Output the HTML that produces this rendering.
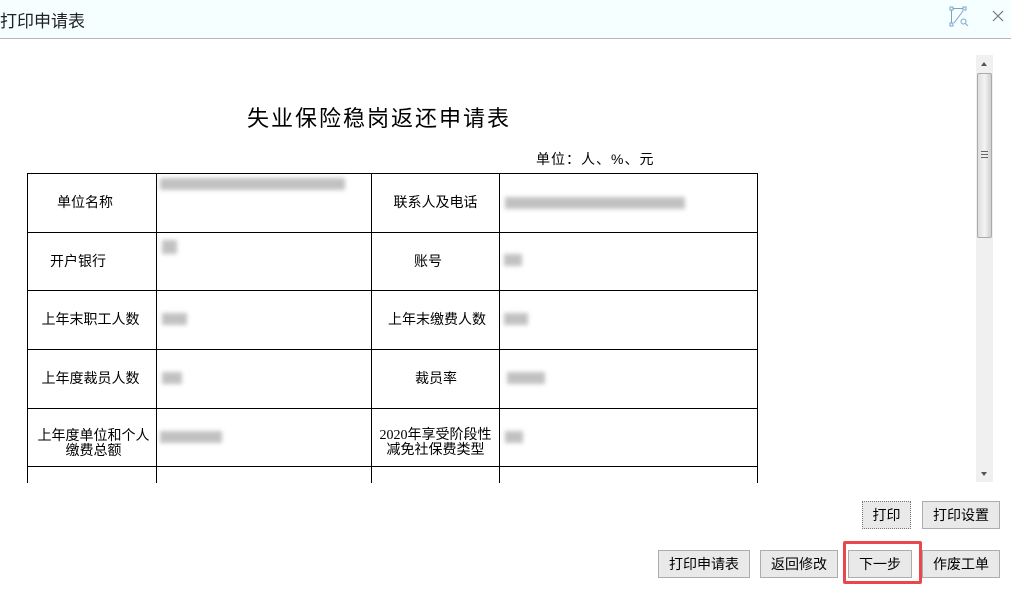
<!DOCTYPE html>
<html><head><meta charset="utf-8"><style>
*{margin:0;padding:0;box-sizing:border-box}
body{width:1011px;height:589px;background:#fff;position:relative;overflow:hidden;font-family:"Liberation Sans","Noto Sans CJK SC",sans-serif;color:#000}
.hd{position:absolute;left:0;top:0;width:1011px;height:39px;background:#f5ffff;border-bottom:1px solid #b5b8b8}
.hd .t{position:absolute;left:0;top:7px;font-size:17px;color:#222}
.a{position:absolute}
.cell{position:absolute;font-size:14px;text-align:center;line-height:15px}
.h{position:absolute;background:#000;height:1px;left:27px;width:731px}
.v{position:absolute;background:#000;width:1px;top:173px;height:310px}
.bl{position:absolute;background:#999;filter:blur(2px);opacity:.6;height:12px}
.btn{position:absolute;height:28px;border:1px solid #adadad;background:#e9e9e9;font-size:14px;text-align:center;line-height:26px;color:#000}
</style></head><body>
<div class="hd"><div class="t">打印申请表</div>
<svg class="a" style="left:948px;top:5px" width="24" height="24" viewBox="0 0 24 24" fill="none" stroke="#7fa3c6" stroke-width="1"><rect x="2" y="2" width="3" height="3"/><rect x="15" y="2" width="3" height="3"/><rect x="2" y="18" width="3" height="3"/><path d="M5 3.5h10M3.5 5v13M15 6l-9 12"/><circle cx="15.5" cy="16.5" r="2.5"/><path d="M17.5 18.5l2.5 2.5"/></svg>
<svg class="a" style="left:991px;top:9px" width="14" height="14" viewBox="0 0 14 14" stroke="#777" stroke-width="1.2"><path d="M2 2l10 10M12 2L2 12"/></svg>
</div>
<div class="a" style="left:247px;top:101px;font-size:22px;letter-spacing:2px">失业保险稳岗返还申请表</div>
<div class="a" style="left:536px;top:149px;font-size:14px;letter-spacing:1px">单位：人、%、元</div>
<div class="h" style="top:173px"></div><div class="h" style="top:232px"></div><div class="h" style="top:290px"></div><div class="h" style="top:349px"></div><div class="h" style="top:408px"></div><div class="h" style="top:466px"></div>
<div class="v" style="left:27px"></div><div class="v" style="left:156px"></div><div class="v" style="left:371px"></div><div class="v" style="left:499px"></div><div class="v" style="left:757px"></div>
<div class="cell" style="left:28px;width:114px;top:195px">单位名称</div>
<div class="cell" style="left:372px;width:127px;top:195px">联系人及电话</div>
<div class="cell" style="left:14px;width:128px;top:254px">开户银行</div>
<div class="cell" style="left:372px;width:112px;top:254px">账号</div>
<div class="cell" style="left:24px;width:133px;top:312px">上年末职工人数</div>
<div class="cell" style="left:369px;width:136px;top:312px">上年末缴费人数</div>
<div class="cell" style="left:24px;width:133px;top:371px">上年度裁员人数</div>
<div class="cell" style="left:400px;width:72px;top:371px">裁员率</div>
<div class="cell" style="left:26px;width:135px;top:428px">上年度单位和个人<br>缴费总额</div>
<div class="cell" style="left:372px;width:127px;top:428px;font-family:'Liberation Serif','Noto Sans CJK SC',serif">2020年享受阶段性<br>减免社保费类型</div>
<div class="bl" style="left:160px;top:178px;width:185px"></div>
<div class="bl" style="left:505px;top:197px;width:180px"></div>
<div class="bl" style="left:162px;top:240px;width:15px;height:14px"></div>
<div class="bl" style="left:504px;top:254px;width:18px"></div>
<div class="bl" style="left:162px;top:313px;width:25px"></div>
<div class="bl" style="left:504px;top:313px;width:24px"></div>
<div class="bl" style="left:162px;top:372px;width:20px"></div>
<div class="bl" style="left:507px;top:372px;width:38px"></div>
<div class="bl" style="left:160px;top:431px;width:62px"></div>
<div class="bl" style="left:505px;top:431px;width:18px"></div>
<div class="a" style="left:976px;top:55px;width:17px;height:427px;background:#f0f0f0"></div>
<div class="a" style="left:977px;top:73px;width:15px;height:165px;background:linear-gradient(90deg,#dcdcdc,#f4f4f4,#cfcfcf);border:1px solid #aaa;border-radius:2px"></div>
<div class="a" style="left:981px;top:151px;width:7px;height:7px;border-top:1px solid #666;border-bottom:1px solid #666"><div style="margin-top:2px;border-top:1px solid #666"></div></div>
<div class="a" style="left:981px;top:62px;border:3px solid transparent;border-bottom:4px solid #555;border-top:0"></div>
<div class="a" style="left:981px;top:472px;border:3px solid transparent;border-top:4px solid #555;border-bottom:0"></div>
<div class="btn" style="left:862px;top:501px;width:49px;border:1px dotted #777">打印</div>
<div class="btn" style="left:922px;top:501px;width:78px">打印设置</div>
<div class="btn" style="left:658px;top:550px;width:92px">打印申请表</div>
<div class="btn" style="left:760px;top:550px;width:78px">返回修改</div>
<div class="a" style="left:843px;top:541px;width:79px;height:43px;border:3px solid #e8484b;border-radius:2px"></div>
<div class="btn" style="left:848px;top:550px;width:64px">下一步</div>
<div class="btn" style="left:922px;top:550px;width:78px">作废工单</div>
</body></html>
